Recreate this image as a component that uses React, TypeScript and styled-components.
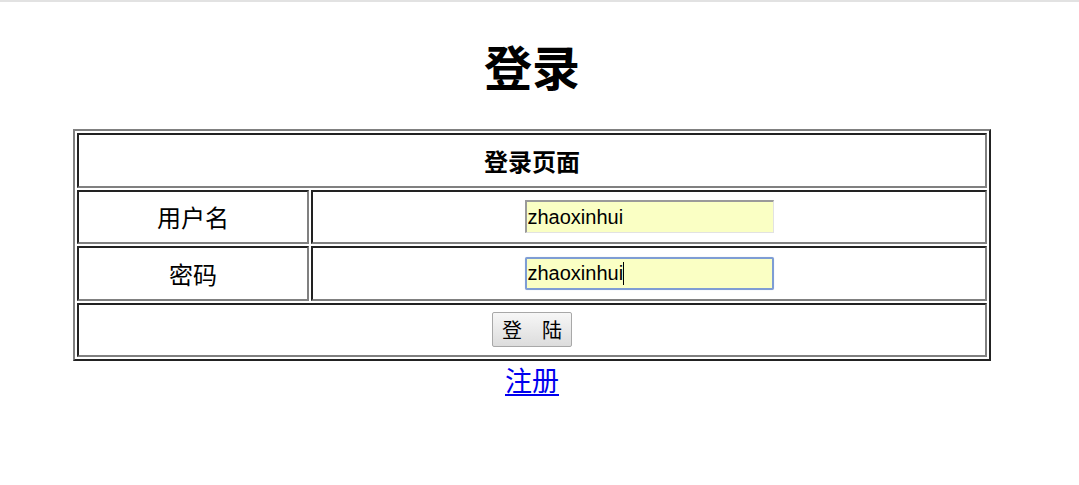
import { memo } from "react";
import styled, { createGlobalStyle, css } from "styled-components";

const GlobalStyle = createGlobalStyle`
  html, body {
    margin: 0;
    padding: 0;
    background: #ffffff;
  }
  body {
    font-family: "Liberation Sans", "Noto Sans CJK SC", sans-serif;
    color: #000000;
  }
`;

const TopBar = styled.div`
  height: 2px;
  background: #e2e2e2;
`;

const Page = styled.div`
  width: 1064px;
  display: flex;
  flex-direction: column;
  align-items: center;
`;

const Title = styled.h1`
  margin: 35px 0 36px;
  font-family: "Noto Sans CJK SC", sans-serif;
  font-size: 48px;
  font-weight: 700;
  line-height: 56px;
`;

const LoginTable = styled.table`
  width: 918px;
  border-collapse: separate;
  border-spacing: 2px;
  border-style: solid;
  border-width: 2px;
  border-color: #808080 #222222 #222222 #808080;
`;

const cellBase = css`
  box-sizing: content-box;
  height: 50.5px;
  padding: 0;
  text-align: center;
  vertical-align: middle;
  border-style: solid;
  border-width: 2px;
  border-color: #222222 #808080 #808080 #222222;
  font-family: "Noto Sans CJK SC", sans-serif;
`;

const HeadCell = styled.th`
  ${cellBase};
  font-size: 24px;
  font-weight: 700;
`;

const LabelCell = styled.td`
  ${cellBase};
  width: 228px;
  font-size: 24px;
`;

const FieldCell = styled.td`
  ${cellBase};
`;

const InputWrap = styled.span`
  position: relative;
  display: inline-block;
  vertical-align: middle;
`;

const TextInput = styled.input<{ $focused?: boolean }>`
  box-sizing: border-box;
  display: block;
  width: 249px;
  height: 33px;
  margin: 0;
  padding: 0 0 0 1px;
  font-family: "Liberation Sans", Arial, sans-serif;
  font-size: 20px;
  color: #000000;
  background: #faffc4;
  outline: none;
  border-style: solid;
  ${({ $focused }) =>
    $focused
      ? css`
          border-width: 2px;
          border-color: #7e9dd4;
          border-radius: 2px;
          box-shadow: 0 0 1px #b9c9ea;
        `
      : css`
          border-width: 2px 1px 1px 2px;
          border-color: #9a9a9a #e2e2e2 #e2e2e2 #9a9a9a;
        `}
`;

const Caret = styled.span`
  position: absolute;
  left: 98px;
  top: 5px;
  width: 1px;
  height: 23px;
  background: #000000;
`;

const SubmitButton = styled.button`
  box-sizing: border-box;
  width: 80px;
  height: 35px;
  padding: 0;
  font-family: "Noto Sans CJK SC", sans-serif;
  font-size: 20px;
  color: #000000;
  background: linear-gradient(#f7f7f7, #dcdcdc);
  border: 1px solid #a8a8a8;
  border-radius: 2px;
  vertical-align: middle;
`;

const RegisterLink = styled.a`
  font-family: "Noto Sans CJK SC", sans-serif;
  font-size: 27px;
  line-height: 38px;
  color: #0000ee;
  text-decoration: underline;
  text-underline-offset: 3px;
`;

const fields = [
  { label: "用户名", value: "zhaoxinhui", focused: false },
  { label: "密码", value: "zhaoxinhui", focused: true },
];

const App = () => {
  return (
    <>
      <GlobalStyle />
      <TopBar />
      <Page>
        <Title>登录</Title>
        <LoginTable>
          <tbody>
            <tr>
              <HeadCell colSpan={2}>登录页面</HeadCell>
            </tr>
            {fields.map((f) => (
              <tr key={f.label}>
                <LabelCell>{f.label}</LabelCell>
                <FieldCell>
                  <InputWrap>
                    <TextInput
                      type="text"
                      defaultValue={f.value}
                      $focused={f.focused}
                    />
                    {f.focused && <Caret />}
                  </InputWrap>
                </FieldCell>
              </tr>
            ))}
            <tr>
              <FieldCell colSpan={2}>
                <SubmitButton type="button">登　陆</SubmitButton>
              </FieldCell>
            </tr>
          </tbody>
        </LoginTable>
        <RegisterLink href="#">注册</RegisterLink>
      </Page>
    </>
  );
};

export default memo(App);
